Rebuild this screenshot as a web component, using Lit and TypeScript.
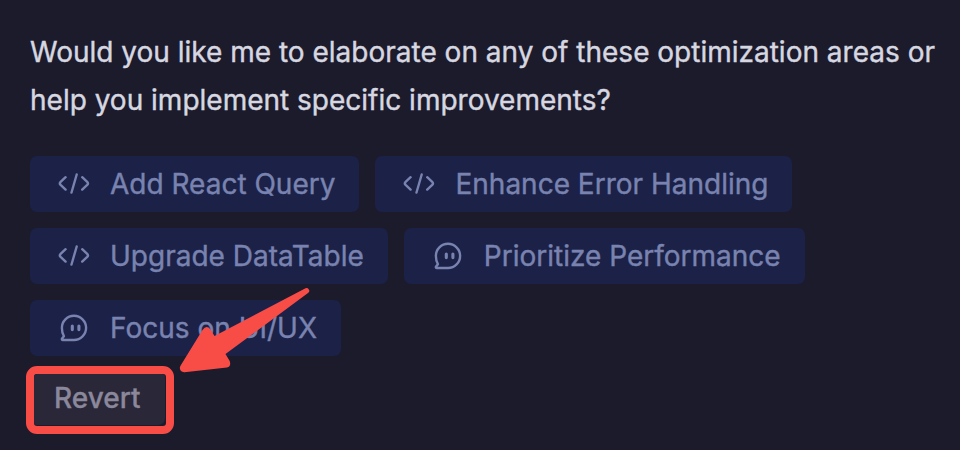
import { LitElement, html, css } from "lit";

const codeIcon = html`<svg class="icon" viewBox="0 0 32 32"><path d="M7.600 9.200L2.600 13.900q-1.500 1.500 0 3l5 4.700M24.200 9.200l5 4.700q1.500 1.500 0 3l-5 4.700M18.700 6.500l-5.200 18" /></svg>`;
const chatIcon = html`<svg class="icon" viewBox="0 0 32 32"><path d="M16 28H4.800c-.9 0-1.200-.8-.7-1.500l1.800-2.300C4.500 22 3.900 19 3.900 16a12.100 12.100 0 1 1 12.100 12z" /><path class="eyes" d="M14.300 14v3.600M20.900 14v3.600" /></svg>`;

class AppRoot extends LitElement {
  static styles = css`
    :host { display: block; height: 450px; box-sizing: border-box; padding: 28px 0 0 30px; background: #1c1b2b; font-family: Inter, sans-serif; font-size: 28px; overflow: hidden; position: relative; }
    .message { margin: 0; color: #d6d7e0; line-height: 48px; white-space: nowrap; -webkit-text-stroke: 0.4px currentColor; }
    .actions { display: flex; flex-direction: column; gap: 16px; margin-top: 32px; }
    .row { display: flex; gap: 16px; }
    .action { display: flex; align-items: center; height: 56px; box-sizing: border-box; padding: 0 24px 0 28px; gap: 20px; border-radius: 7px; background: #1c2147; color: #7983b0; white-space: nowrap; -webkit-text-stroke: 0.4px currentColor; }
    .icon { width: 32px; height: 32px; fill: none; stroke: currentColor; stroke-width: 2.4; stroke-linecap: round; stroke-linejoin: round; }
    .eyes { stroke-width: 3.1; }
    .revert { display: flex; width: 148px; height: 68px; box-sizing: border-box; margin: 10px 0 0 -4px; border: 8px solid #f84c47; border-radius: 11px; }
    .revert-button { display: flex; align-items: center; width: 131px; height: 51px; box-sizing: border-box; padding: 0 0 4px 20px; border-radius: 3px 3px 7px 3px; background: #292738; color: #8b889b; font-weight: 500; -webkit-text-stroke: 0.3px currentColor; }
    .arrow { position: absolute; left: 0; top: 0; width: 960px; height: 450px; fill: #f84c47; }
  `;
  render() {
    const button = (icon: unknown, text: string) => html`<div class="action">${icon}<span>${text}</span></div>`;
    return html`
      <p class="message">Would you like me to elaborate on any of these optimization areas or<br />help you implement specific improvements?</p>
      <div class="actions">
        <div class="row">${button(codeIcon, "Add React Query")}${button(codeIcon, "Enhance Error Handling")}</div>
        <div class="row">${button(codeIcon, "Upgrade DataTable")}${button(chatIcon, "Prioritize Performance")}</div>
        <div class="row">${button(chatIcon, "Focus on UI/UX")}</div>
      </div>
      <div class="revert"><div class="revert-button">Revert</div></div>
      <svg class="arrow" viewBox="0 0 960 450"><path d="M305.500 288.300Q307.500 287.300 308.500 289L309.200 290.300Q309.800 291.800 308 293L225.500 354L229.700 361Q231.500 366.500 227 367.400L184.500 372.200C180.500 372.500 178.500 368.500 180.800 365.200L202.500 330Q206.500 324.500 210.500 329.500L214.500 336Z" /></svg>`;
  }
}
customElements.define("app-root", AppRoot);
